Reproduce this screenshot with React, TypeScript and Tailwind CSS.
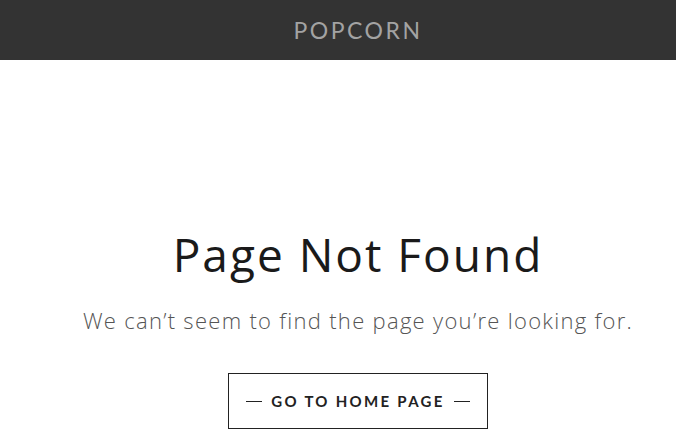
export default function App() {
  return (
    <div className="min-h-screen bg-white pl-[40px]" style={{ fontFamily: "'Open Sans', 'Noto Sans', sans-serif" }}>
      <header className="-ml-[40px] h-[60px] bg-[#333333] flex items-center justify-center pl-[40px]">
        <span className="text-[23px] tracking-[2.5px] text-[#a3a3a3] leading-none" style={{ fontFamily: "Lato, sans-serif" }}>POPCORN</span>
      </header>
      <main className="flex flex-col items-center pt-[167px]">
        <h1 className="text-[46px] leading-[54px] tracking-[2px] text-[#1a1a1a]">Page Not Found</h1>
        <p className="mt-[24px] text-[22px] font-light leading-[30px] tracking-[1.3px] text-[#555555]">We can’t seem to find the page you’re looking for.</p>
        <a className="mt-[38px] w-[260px] h-[56px] border border-[#222222] flex items-center justify-center gap-[9px] text-[15px] font-bold tracking-[2.3px] text-[#222222]" style={{ fontFamily: "Lato, sans-serif" }}>
          <span className="block w-[16px] h-px bg-[#222222]" />
          <span>GO TO HOME PAGE</span>
          <span className="block w-[16px] h-px bg-[#222222]" />
        </a>
      </main>
    </div>
  );
}
